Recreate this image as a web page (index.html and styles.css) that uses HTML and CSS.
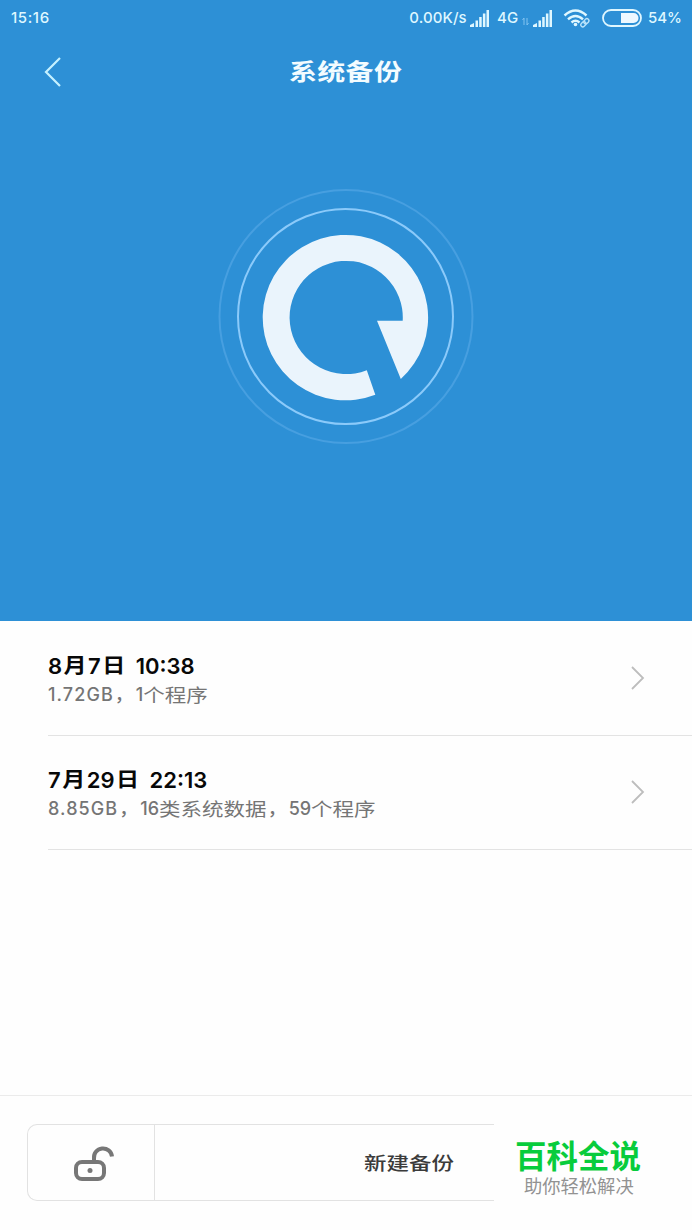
FILE: index.html
```html
<!DOCTYPE html>
<html lang="zh-CN">
<head>
<meta charset="utf-8">
<title>系统备份</title>
<link rel="stylesheet" href="styles.css">
</head>
<body>
<div class="screen">
  <section class="hero">
    <div class="status">
      <span class="clock">15:16</span>
      <span class="speed">0.00K/s</span>
      <svg class="signal" width="20" height="18" viewBox="0 0 20 18"><path d="M0 18v-2l4-2v4zM5.500 18v-6.500h2.500v6.500zM9.200 18V8h2.500v10zM12.900 18V4.500h2.500V18zM16.500 18V1H19v17z"/></svg>
      <span class="network">4G</span>
      <svg class="updown" width="7" height="9" viewBox="0 0 7 9"><path d="M2 8V1L.5 3M5 1v7l1.500-2"/></svg>
      <svg class="signal second" width="20" height="18" viewBox="0 0 20 18"><path d="M0 18v-2l4-2v4zM5.500 18v-6.500h2.500v6.500zM9.200 18V8h2.500v10zM12.900 18V4.500h2.500V18zM16.500 18V1H19v17z"/></svg>
      <svg class="wifi" width="28" height="20" viewBox="0 0 28 20"><path d="M1.500 7.500Q12.500-2.500 23.500 7.500M5 11.300q7.500-6.800 15 0M8.500 14.500q4-3.500 8 0"/><circle cx="12.500" cy="16.500" r="1.800"/><g class="link" transform="rotate(-45 22 14.500)"><rect x="16.800" y="12.600" width="5.600" height="4" rx="2"/><rect x="21" y="12.600" width="5.600" height="4" rx="2"/></g></svg>
      <svg class="battery" width="40" height="18" viewBox="0 0 40 18"><rect class="shell" x="1" y="1" width="38" height="16" rx="8"/><path d="M19 4h12.500a5 5 0 0 1 0 10H19z"/></svg>
      <span class="percent">54%</span>
    </div>
    <header class="titlebar">
      <svg class="back" width="20" height="32" viewBox="0 0 20 32"><path d="M17 2 3 16l14 14"/></svg>
      <h1 class="title">系统备份</h1>
    </header>
    <svg class="emblem" width="260" height="260" viewBox="216 187 260 260">
      <circle class="halo" cx="346" cy="316.500" r="126.500"/>
      <circle class="ring" cx="345.500" cy="316.500" r="107.500"/>
      <path d="M377 320.700H402.700A56.600 56.600 0 1 0 366.800 370.200L375.300 394.700A82.700 82.700 0 1 1 400.800 379Z"/>
    </svg>
  </section>
  <main class="list">
    <article class="item">
      <div class="copy">
        <h2 class="date"><span>8</span><span class="han">月</span><span>7</span><span class="han">日</span><span class="time">10:38</span></h2>
        <p class="detail"><span class="size">1.72GB</span><span class="comma">，</span><span>1</span><span class="han">个程序</span></p>
      </div>
      <svg class="chevron" width="16" height="26" viewBox="0 0 16 26"><path d="m2 2 11 11L2 24"/></svg>
    </article>
    <article class="item">
      <div class="copy">
        <h2 class="date"><span>7</span><span class="han">月</span><span>29</span><span class="han">日</span><span class="time">22:13</span></h2>
        <p class="detail"><span class="size">8.85GB</span><span class="comma">，</span><span>16</span><span class="han">类系统数据</span><span class="comma">，</span><span>59</span><span class="han">个程序</span></p>
      </div>
      <svg class="chevron" width="16" height="26" viewBox="0 0 16 26"><path d="m2 2 11 11L2 24"/></svg>
    </article>
  </main>
  <footer class="footer">
    <div class="actions">
      <div class="unlock"><svg width="44" height="38" viewBox="0 0 44 38"><rect x="3" y="17" width="28" height="17" rx="6"/><path d="M21 16v-2.500a9 9 0 0 1 18-2"/><circle cx="17" cy="25.500" r="2.500"/></svg></div>
      <div class="create"><span>新建备份</span></div>
    </div>
    <aside class="brand"><strong>百科全说</strong><span>助你轻松解决</span></aside>
  </footer>
</div>
</body>
</html>
```
FILE: styles.css
```css
* { box-sizing: border-box; }
body { margin: 0; font-family: Inter, "Noto Sans CJK SC", sans-serif; }
h1, h2, p { margin: 0; }
svg { display: block; flex: none; }
.screen { width: 692px; height: 1230px; display: flex; flex-direction: column; overflow: hidden; background: #fefefe; }
.hero { height: 621px; background: #2d90d6; display: flex; flex-direction: column; }
.status { height: 35px; display: flex; align-items: center; padding: 0 10px 0 11px; color: #dff7ff; font-size: 15px; font-weight: 500; white-space: nowrap; }
.clock { width: 400px; letter-spacing: .6px; }
.speed { width: 61px; letter-spacing: .1px; }
.network { width: 25px; margin-left: 7px; }
.signal { fill: #dff7ff; }
.updown { fill: none; stroke: #82c3f0; margin-top: 8px; }
.second { margin-left: 4px; }
.wifi { margin-left: 10px; fill: none; stroke: #dff7ff; stroke-width: 2.4; }
.wifi circle { fill: #dff7ff; stroke: none; }
.wifi .link { stroke: #b8e2fa; stroke-width: 1.4; }
.battery { margin-left: 11px; fill: #edf8ff; }
.shell { fill: none; stroke: #dff7ff; stroke-width: 1.8; }
.percent { margin-left: 6px; }
.titlebar { height: 73px; display: grid; grid-template-columns: 289px 1fr; align-items: center; }
.back { margin-left: 43px; fill: none; stroke: #c5f1ff; stroke-width: 2.2; }
.title { color: #f3fcff; font-size: 28px; font-weight: 700; line-height: 36px; letter-spacing: .3px; transform: scaleY(.82); }
.emblem { margin: 79px 0 0 216px; fill: #eaf4fc; }
.halo { fill: none; stroke: #479fe0; stroke-width: 2; }
.ring { fill: none; stroke: #8bcafa; stroke-width: 2; }
.list { flex: 1; padding: 1px 0 0 48px; }
.item { height: 114px; border-bottom: 1px solid #e3e3e3; display: flex; justify-content: space-between; }
.copy { padding-top: 29px; }
.date { height: 30px; display: flex; align-items: center; font-size: 22px; font-weight: 600; line-height: 30px; color: #080808; }
.date .han { margin: 0 1.500px; font-size: 23px; transform: scaleY(.88); }
.time { margin-left: 9px; }
.detail { height: 28px; display: flex; align-items: center; font-size: 18px; line-height: 28px; color: #757575; font-weight: 500; }
.detail .han { font-size: 21.500px; transform: scaleY(.84); font-weight: 400; }
.size { letter-spacing: 1.100px; }
.comma { width: 22px; padding-left: 1px; }
.chevron { margin: 43px 46px 0 0; fill: none; stroke: #bdbdbd; stroke-width: 1.8; }
.footer { height: 135px; border-top: 1px solid #ebebeb; padding: 28px 0 0 27px; display: flex; }
.actions { width: 467px; height: 77px; border: 1px solid #e2e2e2; border-right: 0; border-radius: 10px 0 0 10px; display: flex; }
.unlock { width: 127px; border-right: 1px solid #e2e2e2; padding: 20px 0 0 45px; }
.unlock svg { fill: none; stroke: #777; stroke-width: 4; }
.unlock circle { fill: #777; stroke: none; }
.create { padding: 0 0 2px 209px; display: flex; align-items: center; color: #3b3b3b; font-size: 22.500px; font-weight: 500; }
.create span { transform: scaleY(.82); }
.brand { padding: 14px 0 0 21px; display: flex; flex-direction: column; font-family: "Noto Sans CJK SC", sans-serif; }
.brand strong { color: #08cc3c; font-size: 31.500px; line-height: 33px; font-weight: 700; }
.brand span { color: #929292; font-size: 18.300px; line-height: 28px; margin-left: 9px; font-weight: 400; }
```
